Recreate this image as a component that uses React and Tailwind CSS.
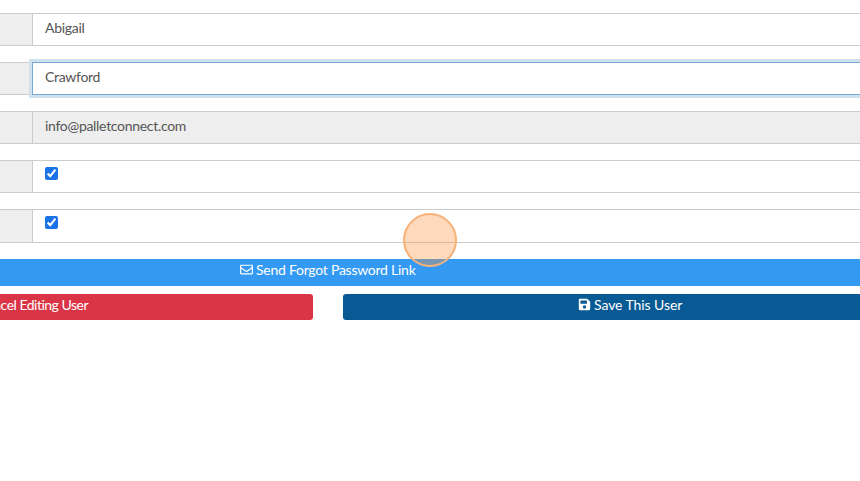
import React from 'react';
import { FaRegEnvelope, FaSave } from 'react-icons/fa';

const Row = ({ children, disabled, focused, tall }) => (
  <div className={`flex ${tall ? 'h-[34px]' : 'h-[33px]'} mb-4`}>
    <div className="w-[32px] shrink-0 bg-[#eeeeee] border-y border-[#cccccc]" />
    <div
      className={`flex-1 flex items-center pl-3 pb-[5px] border border-r-0 text-[14px] tracking-[-0.3px] text-[#555555] ${
        disabled ? 'bg-[#eeeeee]' : 'bg-white'
      } ${focused ? 'border-[#74a9d8] shadow-[0_0_0_3px_#cfe0ee]' : 'border-[#cccccc]'}`}
    >
      {children}
    </div>
  </div>
);

const Check = () => <input type="checkbox" defaultChecked className="accent-[#1b73e8] mb-[2px]" />;

export default function App() {
  return (
    <div className="relative w-[860px] h-[481px] overflow-hidden bg-white font-['Lato',sans-serif]">
      <div className="pt-[13px]">
        <Row>Abigail</Row>
        <Row focused>Crawford</Row>
        <Row disabled>info@palletconnect.com</Row>
        <Row><Check /></Row>
        <Row tall><Check /></Row>

        <div className="flex items-center h-[27px] pl-[240px] pb-[7px] bg-[#3399f3] text-white text-[14px] tracking-[-0.25px] mb-2">
          <FaRegEnvelope className="mr-[3px] text-[13px]" />
          Send Forgot Password Link
        </div>

        <div className="flex gap-[30px] h-[26px] text-white text-[14px]">
          <div className="flex items-center justify-end w-[313px] shrink-0 pr-[225px] pb-[5px] tracking-[-0.5px] whitespace-nowrap bg-[#da3546] rounded-r-[3px]">
            Cancel Editing User
          </div>
          <div className="flex items-center flex-1 pl-[235px] pb-[5px] tracking-[-0.08px] bg-[#085a94] rounded-l-[3px]">
            <FaSave className="mr-[3px] text-[13px]" />
            Save This User
          </div>
        </div>
      </div>

      <div className="absolute left-[403px] top-[213px] w-[54px] h-[54px] rounded-full bg-[#fb923c]/35 border-2 border-[#f7b27a]" />
    </div>
  );
}
